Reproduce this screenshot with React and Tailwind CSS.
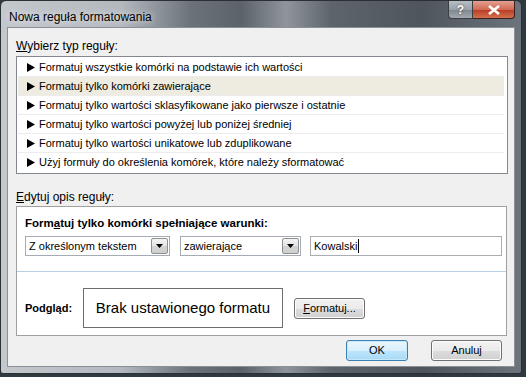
import React from 'react';

// Lista typów reguł
const reguly = [
  'Formatuj wszystkie komórki na podstawie ich wartości',
  'Formatuj tylko komórki zawierające',
  'Formatuj tylko wartości sklasyfikowane jako pierwsze i ostatnie',
  'Formatuj tylko wartości powyżej lub poniżej średniej',
  'Formatuj tylko wartości unikatowe lub zduplikowane',
  'Użyj formuły do określenia komórek, które należy sformatować',
];

const font = { fontFamily: '"Liberation Sans", Arial, sans-serif' };

function Arrow() {
  return (
    <svg width="7" height="5" viewBox="0 0 7 5">
      <path d="M0 0h7L3.5 4z" fill="#000" />
    </svg>
  );
}

function Combo({ value, className }) {
  return (
    <div className={`h-[20px] border border-[#a5acb5] bg-white flex items-center pl-[3px] pr-[1px] ${className}`}>
      <span className="flex-1 text-[11px] text-black">{value}</span>
      <div className="w-[17px] h-[16px] border border-[#8e8f8f] rounded-[2px] bg-[linear-gradient(#f3f3f3,#e4e4e4_50%,#d4d4d4_51%,#cfcfcf)] flex items-center justify-center">
        <Arrow />
      </div>
    </div>
  );
}

function VistaButton({ children, className = '', isDefault }) {
  return (
    <button
      className={`h-[21px] rounded-[3px] border text-[11px] text-black ${
        isDefault
          ? 'border-[#3c7fb1] bg-[linear-gradient(#eaf6fd,#d9f0fc_50%,#bee6fd_51%,#a7d9f5)] shadow-[inset_0_0_0_1px_#c8e8fa]'
          : 'border-[#707070] bg-[linear-gradient(#f2f2f2,#ebebeb_50%,#dddddd_51%,#cfcfcf)] shadow-[inset_0_0_0_1px_#fcfcfc]'
      } ${className}`}
    >
      {children}
    </button>
  );
}

export default function App() {
  return (
    <div className="w-[526px] h-[377px] bg-[#2e3a40] overflow-hidden" style={font}>
      <div className="w-[522px] h-[374px] rounded-t-[6px] rounded-b-[3px] border border-[#2b3035] bg-[linear-gradient(90deg,#c3c8cd_0px,#b3b9bf_120px,#6b727a_190px,#5b626a_240px,#8f959b_285px,#5d646b_330px,#4e555c_420px,#6d747b_522px)] flex flex-col">
        {/* Pasek tytułu */}
        <div className="h-[26px] flex items-start">
          <span className="ml-[8px] mt-[7px] text-[12px] text-black [text-shadow:0_0_6px_#ffffff]">
            Nowa reguła formatowania
          </span>
          <div className="ml-auto mr-[6px] flex">
            <div className="w-[25px] h-[18px] rounded-bl-[4px] border border-[#3a3f44] border-t-0 bg-[linear-gradient(#b8bec4,#9aa1a8_50%,#7d858d_51%,#a2a9b0)] flex items-center justify-center text-white text-[12px] font-bold [text-shadow:0_0_2px_#333]">
              ?
            </div>
            <div className="w-[42px] h-[18px] rounded-br-[4px] border border-[#3a2020] border-t-0 border-l-0 bg-[linear-gradient(#e3a090,#d06a55_50%,#b83a22_51%,#d3704f)] flex items-center justify-center">
              <svg width="12" height="10" viewBox="0 0 12 10">
                <path d="M1 1l10 8M11 1L1 9" stroke="#fff" strokeWidth="2.6" />
              </svg>
            </div>
          </div>
        </div>

        {/* Obszar klienta */}
        <div className="mx-[6px] mb-[6px] flex-1 bg-[#f0f0f0] border border-[#8a9096] pl-[8px] pr-[6px] pt-[11px] flex flex-col">
          <div className="text-[12px] leading-[14px] text-black">
            <span className="underline">W</span>ybierz typ reguły:
          </div>
          <div className="mt-[3px] border border-[#828790] bg-white py-[1px] pl-[1px] pr-[3px]">
            {reguly.map((r, i) => (
              <div
                key={i}
                className={`h-[19px] flex items-center gap-[4px] pl-[9px] text-[11px] text-black border-b border-[#ececec] last:border-b-0 ${
                  i === 1 ? 'bg-[#eeebe0]' : ''
                }`}
              >
                <svg width="8" height="9" viewBox="0 0 8 9">
                  <path d="M0 0l8 4.5L0 9z" fill="#000" />
                </svg>
                <span>{r}</span>
              </div>
            ))}
          </div>

          <div className="mt-[16px] text-[12px] leading-[14px] text-black">
            <span className="underline">E</span>dytuj opis reguły:
          </div>
          <div className="mt-[2px] mr-[1px] border border-[#a0a0a0] bg-white">
            <div className="pl-[8px] pt-[9px] pb-[15px] border-b border-[#b9cfe3]">
              <div className="text-[11.5px] leading-[14px] font-bold text-black">
                Form<span className="underline">a</span>tuj tylko komórki spełniające warunki:
              </div>
              <div className="mt-[6px] flex items-center">
                <Combo value="Z określonym tekstem" className="w-[145px]" />
                <Combo value="zawierające" className="w-[121px] ml-[10px]" />
                <div className="ml-[9px] w-[192px] h-[20px] border border-[#abadb3] bg-white flex items-center pl-[3px] text-[11px] text-black">
                  Kowalski<span className="inline-block w-[1px] h-[14px] bg-black ml-[1px]" />
                </div>
              </div>
            </div>
            <div className="pl-[8px] pt-[16px] pb-[7px] flex items-center">
              <span className="w-[58px] text-[11px] font-bold text-black">Podgląd:</span>
              <div className="w-[200px] h-[40px] border border-[#6d6d6d] bg-white flex items-center justify-center text-[15px] text-black">
                Brak ustawionego formatu
              </div>
              <VistaButton className="ml-[11px] w-[71px] h-[21px]">
                <span className="underline">F</span>ormatuj...
              </VistaButton>
            </div>
          </div>

          <div className="mt-[4px] flex justify-end gap-[23px] pr-[6px]">
            <VistaButton isDefault className="w-[62px]">OK</VistaButton>
            <VistaButton className="w-[71px]">Anuluj</VistaButton>
          </div>
        </div>
      </div>
    </div>
  );
}
